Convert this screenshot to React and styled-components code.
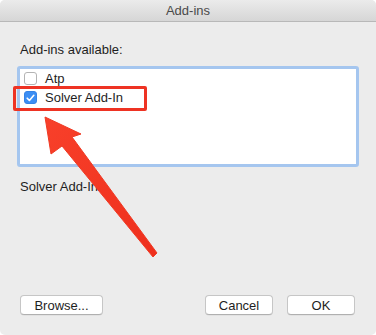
import styled, { createGlobalStyle } from "styled-components";

const GlobalStyle = createGlobalStyle`
    html, body {
        margin: 0;
        padding: 0;
        background: #ffffff;
    }
    body {
        font-family: "Liberation Sans", Arial, sans-serif;
        -webkit-font-smoothing: antialiased;
    }
`

const addins = [
    { name: "Atp", checked: false },
    { name: "Solver Add-In", checked: true }
];

function Checkbox({ checked }) {
    return <Box $checked={checked}>
        {checked && (
            <svg width="9" height="8" viewBox="0 0 9 8">
                <path d="M1.2 4.2 L3.4 6.4 L7.8 1.3" fill="none" stroke="#ffffff" strokeWidth="1.6" strokeLinecap="round" strokeLinejoin="round" />
            </svg>
        )}
    </Box>
}

export default function App() {
    return <>
        <GlobalStyle />
        <Window>
            <TitleBar>Add-ins</TitleBar>
            <Body>
                <Label>Add-ins available:</Label>
                <ListBox>
                    {addins.map((item) => (
                        <Row key={item.name}>
                            <Checkbox checked={item.checked} />
                            <span>{item.name}</span>
                        </Row>
                    ))}
                </ListBox>
                <Description>Solver Add-In</Description>
                <Footer>
                    <Button $width={83}>Browse...</Button>
                    <Spacer />
                    <Button $width={68}>Cancel</Button>
                    <Button $width={68}>OK</Button>
                </Footer>
            </Body>

            <Highlight />
            <Arrow width="376" height="335" viewBox="0 0 376 335">
                <defs>
                    <linearGradient id="arrowFill" x1="0" y1="0" x2="1" y2="1">
                        <stop offset="0" stopColor="#f8402a" />
                        <stop offset="1" stopColor="#ee2f1d" />
                    </linearGradient>
                </defs>
                <polygon
                    points="45,117 81,134 72,137 157,253 153,257 62,146 51,154"
                    fill="url(#arrowFill)"
                    strokeLinejoin="round"
                    stroke="#f03a24"
                    strokeWidth="1"
                />
            </Arrow>
        </Window>
    </>
}

const Window = styled.div`
    position: relative;
    width: 376px;
    height: 335px;
    display: flex;
    flex-direction: column;
    background: #ececec;
    border-radius: 5px;
    overflow: hidden;
    color: #1e1e1e;
    font-size: 13px;
`

const TitleBar = styled.div`
    height: 21px;
    flex-shrink: 0;
    display: flex;
    align-items: center;
    justify-content: center;
    background: linear-gradient(#ebebeb, #d6d6d6);
    border-bottom: 1px solid #b8b8b8;
    color: #4a4a4a;
    font-size: 13px;
`

const Body = styled.div`
    flex: 1;
    display: flex;
    flex-direction: column;
    padding: 20px 17px 20px 17px;
`

const Label = styled.div`
    line-height: 16px;
    padding-left: 3px;
    margin-bottom: 8px;
`

const ListBox = styled.div`
    height: 95px;
    background: #ffffff;
    border: 3px solid #a5c6ef;
    border-radius: 3px;
    padding: 0 4px;
`

const Row = styled.div`
    height: 19px;
    display: flex;
    align-items: center;
    gap: 8px;
    line-height: 16px;
`

const Box = styled.div`
    width: 13px;
    height: 13px;
    box-sizing: border-box;
    border-radius: 3px;
    display: flex;
    align-items: center;
    justify-content: center;
    background: ${(p) => (p.$checked ? "#3b8ef4" : "#ffffff")};
    border: 1px solid ${(p) => (p.$checked ? "#3583e6" : "#b4b4b4")};
`

const Description = styled.div`
    margin-top: 12px;
    padding-left: 3px;
    line-height: 16px;
`

const Footer = styled.div`
    margin-top: auto;
    display: flex;
    align-items: center;
    gap: 14px;
    padding: 0 4px 0 3px;
`

const Spacer = styled.div`
    flex: 1;
`

const Button = styled.button`
    width: ${(p) => p.$width}px;
    height: 20px;
    padding: 0;
    background: #ffffff;
    border: 1px solid #c6c6c6;
    border-bottom-color: #b0b0b0;
    border-radius: 4px;
    box-shadow: 0 0.5px 0.5px rgba(0, 0, 0, 0.08);
    font-family: "Liberation Sans", Arial, sans-serif;
    font-size: 13px;
    color: #1e1e1e;
`

const Highlight = styled.div`
    position: absolute;
    left: 13px;
    top: 86px;
    width: 128px;
    height: 19px;
    border: 3px solid #ee3323;
    border-radius: 2px;
    pointer-events: none;
`

const Arrow = styled.svg`
    position: absolute;
    left: 0;
    top: 0;
    pointer-events: none;
`
